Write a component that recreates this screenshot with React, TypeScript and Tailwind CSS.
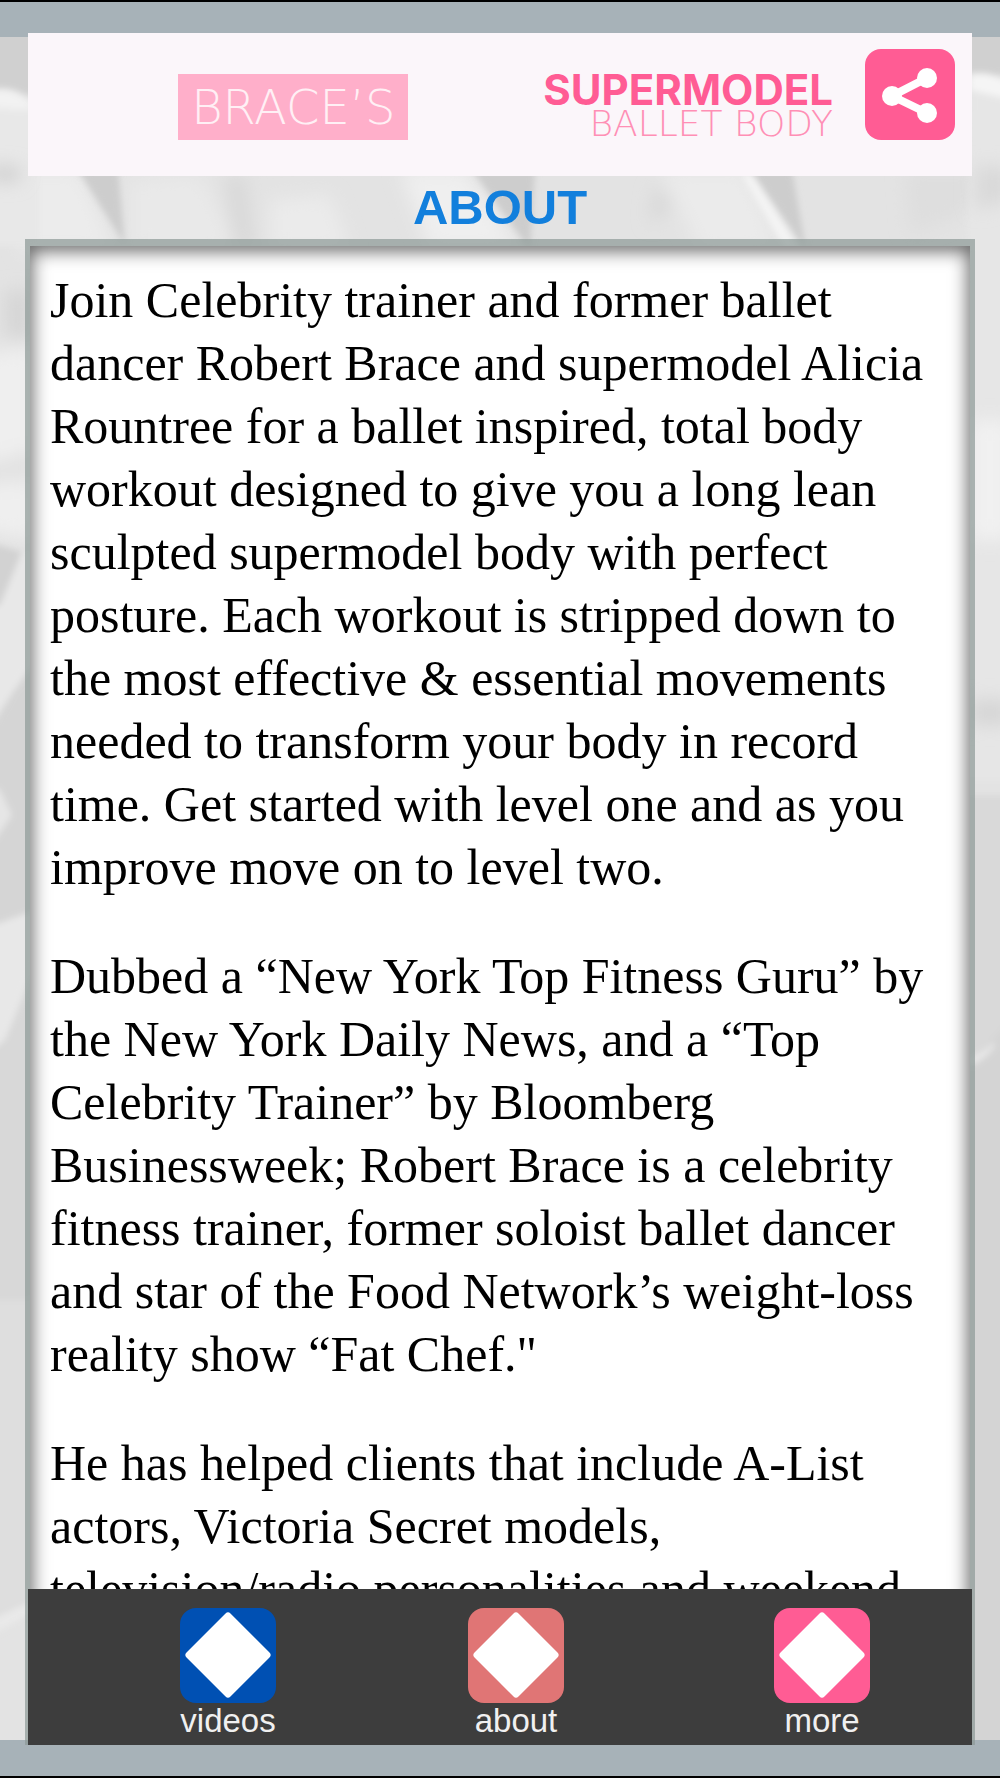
const paragraphs = [
  'Join Celebrity trainer and former ballet dancer Robert Brace and supermodel Alicia Rountree for a ballet inspired, total body workout designed to give you a long lean sculpted supermodel body with perfect posture. Each workout is stripped down to the most effective & essential movements needed to transform your body in record time. Get started with level one and as you improve move on to level two.',
  'Dubbed a “New York Top Fitness Guru” by the New York Daily News, and a “Top Celebrity Trainer” by Bloomberg Businessweek; Robert Brace is a celebrity fitness trainer, former soloist ballet dancer and star of the Food Network’s weight-loss reality show “Fat Chef."',
  'He has helped clients that include A-List actors, Victoria Secret models, television/radio personalities and weekend',
]

const tabs = [
  { label: 'videos', color: 'fill-[#0050b3]' },
  { label: 'about', color: 'fill-[#e07575]' },
  { label: 'more', color: 'fill-[#ff5c94]' },
]

function Backdrop() {
  return (
    <svg
      className="absolute inset-0 w-full h-full"
      viewBox="0 0 1000 1778"
      preserveAspectRatio="none"
      aria-hidden="true"
    >
      <defs>
        <filter id="soft" x="-20%" y="-20%" width="140%" height="140%">
          <feGaussianBlur stdDeviation="3" />
        </filter>
        <filter id="haze" x="-50%" y="-50%" width="200%" height="200%">
          <feGaussianBlur stdDeviation="9" />
        </filter>
      </defs>
      <rect width="1000" height="1778" fill="#e3e3e3" />
      {/* folds behind the title */}
      <g filter="url(#haze)">
        <path d="M20 170H80L115 250H20Z" fill="#ececec" />
        <path d="M130 180L200 175L240 250H130Z" fill="#e9e9e9" />
        <path d="M225 175H245L255 250H235Z" fill="#d8d8d8" />
        <path d="M270 200L330 195L350 250H270Z" fill="#ebebeb" />
        <path d="M400 170H465L520 250H430Z" fill="#efefef" />
        <path d="M660 170H745L780 250H700Z" fill="#ebebeb" />
        <path d="M655 185L672 205L650 225Z" fill="#d6d6d6" />
        <path d="M905 170H1000L960 215L910 235Z" fill="#dedede" />
      </g>
      <g filter="url(#soft)">
        <path d="M-20 20H1020V75H970L20 95L-20 90Z" fill="#d0d0d0" />
        <path d="M-20 92Q20 80 40 110V245H-20Z" fill="#e8e8e8" />
        <path d="M-20 92Q14 82 34 108L20 110L-20 106Z" fill="#f2f2f2" />
        <path d="M78 170H118L125 245Z" fill="#cdcdcd" />
        <path d="M472 170H535L530 250Z" fill="#cdcdcd" />
        <path d="M742 175L752 174L800 250H785Z" fill="#f4f4f4" />
        <path d="M750 170H792L806 250Z" fill="#cdcdcd" />
        <path d="M970 73Q1000 70 1020 90V780H960Z" fill="#e6e6e6" />
        <path d="M970 75Q1000 70 1020 95V102L970 90Z" fill="#f5f5f5" />
      </g>
      {/* left margin */}
      <g filter="url(#haze)">
        <path d="M-10 165L22 168L18 182L-10 180Z" fill="#cecece" />
        <path d="M5 290H30V342L5 335Z" fill="#d5d5d5" />
        <path d="M-20 355L35 345V540L-20 530Z" fill="#efefef" />
        <path d="M-20 465L35 450V480L-20 485Z" fill="#e2e2e2" />
      </g>
      <g filter="url(#soft)">
        <path d="M-20 540L22 552L0 605L-20 620Z" fill="#d2d2d2" />
        <path d="M22 552H35V660L-20 740V610L0 605Z" fill="#e8e8e8" />
        <path d="M35 665V910L-20 940V750Q10 690 35 665Z" fill="#d5d5d5" />
        <path d="M-20 780L0 790L12 815L-5 840H-20Z" fill="#e6e6e6" />
        <path d="M-20 930L35 910V965L5 1040L-20 1060Z" fill="#e8e8e8" />
        <path d="M-20 1060L5 1040L35 970V1320H-20Z" fill="#d8d8d8" />
        <path d="M-20 1300H35V1620H-20Z" fill="#dedede" />
        <path d="M-20 1625L35 1600V1612L-20 1640Z" fill="#e9e9e9" />
      </g>
      {/* right margin */}
      <g filter="url(#haze)">
        <path d="M975 165L1010 168V200L975 210Z" fill="#d9d9d9" />
        <path d="M970 420H1010V540H970Z" fill="#f1f1f1" />
        <path d="M970 700H1010V725H970Z" fill="#d5d5d5" />
      </g>
      <g filter="url(#soft)">
        <path d="M965 795H1020V1778H965Z" fill="#d9d9d9" />
        <path d="M965 1065Q995 1040 1020 1010V1778H965Z" fill="#d4d4d4" />
        <path d="M970 1058Q985 1050 995 1042V1046Q985 1060 970 1066Z" fill="#e8e8e8" />
      </g>
    </svg>
  )
}

function ShareIcon() {
  return (
    <svg viewBox="0 0 90 91" className="w-full h-full" aria-hidden="true">
      <path d="M62 29L27 47L62 64" fill="none" stroke="white" strokeWidth="8" />
      <circle cx="62" cy="29" r="10" fill="white" />
      <circle cx="27" cy="47" r="10" fill="white" />
      <circle cx="62" cy="64" r="10" fill="white" />
    </svg>
  )
}

function Header() {
  return (
    <header className="flex justify-end items-start h-[143px] mx-7 pr-[17px] bg-[#fbf6fa] font-['DejaVu_Sans',sans-serif] whitespace-nowrap">
      <div className="flex items-center justify-center mt-[41px] mr-[135px] w-[230px] h-[66px] bg-[#ffafca] text-[#fff0f5] font-extralight text-[48px]">
        BRACE’S
      </div>
      <div className="mt-10 mr-8 flex flex-col items-end">
        <span className="font-['Inter',sans-serif] font-bold text-[42px] leading-[34px] text-[#ff5c94]">
          SUPERMODEL
        </span>
        <span className="font-extralight text-[36px] leading-[34px] text-[#ff8fb5]">
          BALLET BODY
        </span>
      </div>
      <button aria-label="Share" className="mt-4 w-[90px] h-[91px] rounded-2xl bg-[#ff5c94]">
        <ShareIcon />
      </button>
    </header>
  )
}

function TabBar() {
  return (
    <nav className="relative grid grid-cols-[22fr_26fr_25fr] justify-items-center h-[156px] -mx-0.5 pl-[68px] pt-[19px] bg-[#3d3d3d]">
      {tabs.map((tab) => (
        <button key={tab.label} className="flex flex-col items-center w-24">
          <svg viewBox="0 0 96 95" className="w-24 h-[95px]" aria-hidden="true">
            <rect width="96" height="95" rx="16" className={tab.color} />
            <path
              d="M48 8L87 47L48 86L9 47Z"
              fill="white"
              stroke="white"
              strokeWidth="7"
              strokeLinejoin="round"
            />
          </svg>
          <span className="text-[33px] leading-9 text-[#f0f0f0]">{tab.label}</span>
        </button>
      ))}
    </nav>
  )
}

export default function App() {
  return (
    <div className="relative flex flex-col h-screen overflow-hidden font-['Liberation_Sans',sans-serif]">
      <Backdrop />
      <div className="absolute top-0 inset-x-0 h-[37px] border-t-2 border-black bg-[#a7b2b8]" />
      <div className="absolute bottom-0 inset-x-0 h-[38px] border-b-2 border-black bg-[#a7b2b8]" />
      <div className="relative flex flex-col flex-1 min-h-0 pt-[33px] pb-[33px]">
        <Header />
        <h1 className="h-[63px] text-center font-bold text-[49px] leading-[63px] text-[#127fdc]">
          ABOUT
        </h1>
        <main className="flex flex-col flex-1 min-h-0 mx-[25px] border-x-[5px] border-t-[7px] border-[#8c9896]/70 bg-clip-padding">
          <div className="relative flex-1 min-h-0 overflow-hidden bg-white">
            <div className="h-full overflow-hidden px-5 pt-[23px] font-['Liberation_Serif',serif] text-[50px] leading-[63px] text-black">
              {paragraphs.map((text) => (
                <p key={text} className="mb-[46px]">
                  {text}
                </p>
              ))}
            </div>
            <div className="absolute inset-x-0 top-0 -bottom-8 pointer-events-none shadow-[inset_0_3px_18px_2px_rgba(0,0,0,0.6)]" />
          </div>
          <TabBar />
        </main>
      </div>
    </div>
  )
}
